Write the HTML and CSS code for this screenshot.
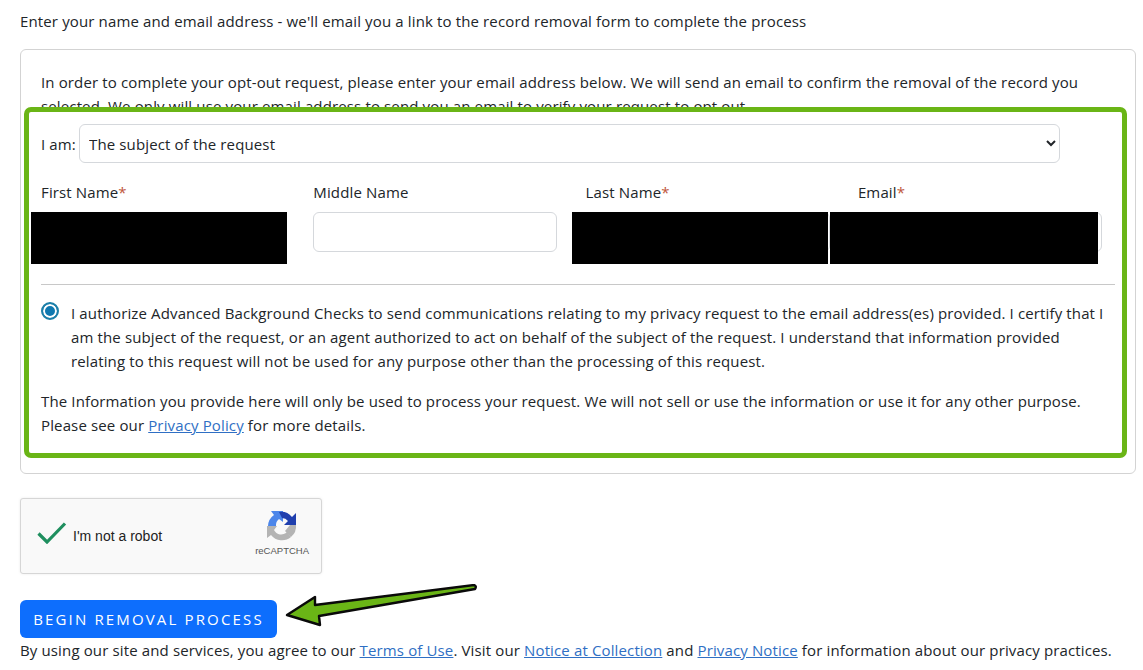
FILE: index.html
```html
<!DOCTYPE html>
<html lang="en">
<head>
<meta charset="utf-8">
<title>Record removal</title>
<link rel="stylesheet" href="styles.css">
</head>
<body>
<p class="lead">Enter your name and email address - we'll email you a link to the record removal form to complete the process</p>
<section class="card">
  <p class="intro">In order to complete your opt-out request, please enter your email address below. We will send an email to confirm the removal of the record you selected. We only will use your email address to send you an email to verify your request to opt out.</p>
  <div class="highlight">
    <div class="iam">
      <label class="iam-label">I am:</label>
      <select class="select"><option>The subject of the request</option></select>
    </div>
    <div class="fields">
      <div class="field"><label>First Name<span class="req">*</span></label><div class="control"><input class="input"><i class="redact redact-first"></i></div></div>
      <div class="field"><label>Middle Name</label><div class="control"><input class="input"></div></div>
      <div class="field"><label>Last Name<span class="req">*</span></label><div class="control"><input class="input"><i class="redact redact-last"></i></div></div>
      <div class="field"><label>Email<span class="req">*</span></label><div class="control"><input class="input"><i class="redact redact-email"></i></div></div>
    </div>
    <hr class="rule">
    <div class="consent">
      <span class="radio"></span>
      <p>I authorize Advanced Background Checks to send communications relating to my privacy request to the email address(es) provided. I certify that I am the subject of the request, or an agent authorized to act on behalf of the subject of the request. I understand that information provided relating to this request will not be used for any purpose other than the processing of this request.</p>
    </div>
    <p class="note">The Information you provide here will only be used to process your request. We will not sell or use the information or use it for any other purpose. Please see our <a href="#">Privacy Policy</a> for more details.</p>
  </div>
</section>
<div class="captcha">
  <svg class="check" viewBox="0 0 30 22" width="30" height="22"><path d="M1.5 11.5 L10 20 L28 1.5" fill="none" stroke="#1f8f5f" stroke-width="3.2"/></svg>
  <span class="captcha-text">I'm not a robot</span>
  <div class="captcha-brand">
    <svg viewBox="0 0 32 32" width="32" height="32">
      <path d="M2 16 A14 14 0 0 1 8 5 L5 1 L17 1 L17 12 L13 9 A8 8 0 0 0 10 16 Z" fill="#4c86ea"/>
      <path d="M13 2 A14 14 0 0 1 26 7 L30 3 L30 15 L18 15 L22 11 A8 8 0 0 0 16 8 Z" fill="#1f3fae"/>
      <path d="M1 16 L11 16 L8 20 A8 8 0 0 0 21 22 L25 27 A14 14 0 0 1 5 25 L1 28 Z" fill="#b4b4b4"/>
      <path d="M19 21 L24 15 L30 15 A14 14 0 0 1 25 27 Z" fill="#b4b4b4"/>
    </svg>
    <span class="captcha-name">reCAPTCHA</span>
  </div>
</div>
<div class="action">
  <button class="begin">BEGIN REMOVAL PROCESS</button>
  <svg class="arrow" viewBox="0 0 200 50" width="200" height="50"><path d="M3 31 L31 13 L31 21 L190 1 Q193 2 191 5 L35 32 L36 41 Z" fill="#6ab516" stroke="#0a0a0a" stroke-width="2.4" stroke-linejoin="round"/></svg>
</div>
<p class="foot">By using our site and services, you agree to our <a href="#">Terms of Use</a>. Visit our <a href="#">Notice at Collection</a> and <a href="#">Privacy Notice</a> for information about our privacy practices.</p>
</body>
</html>
```
FILE: styles.css
```css
* { box-sizing: border-box; }
html, body { margin: 0; height: 670px; overflow: hidden; }
body {
  padding: 9px 7px 0 20px;
  background: #fff;
  color: #212529;
  font: 15px/24px "Open Sans", sans-serif;
  letter-spacing: .135px;
}
p { margin: 0; }
a { color: #2f6fc4; text-decoration: underline; }
.lead { margin-bottom: 16px; }
.card {
  height: 425px;
  padding: 20px 20px 0;
  border: 1px solid #d3d3d3;
  border-radius: 6px;
}
.intro { height: 37px; overflow: hidden; }
.highlight {
  position: relative;
  margin: 0 -12px 0 -17px;
  height: 351px;
  padding: 12px 7px 0 12px;
  background: #fff;
  border: 5px solid #6ab516;
  border-radius: 7px;
}
.iam { display: flex; align-items: center; gap: 4px; height: 39px; }
.iam-label { flex: none; width: 34px; white-space: nowrap; }
.select {
  width: 981px;
  height: 39px;
  padding: 0 5px;
  border: 1px solid #d5d8dc;
  border-radius: 6px;
  background: #fff;
  color: #212529;
  font: inherit;
  letter-spacing: inherit;
}
.fields {
  display: grid;
  grid-template-columns: repeat(4, 244px);
  column-gap: 28.3px;
  margin-top: 17px;
}
.field label { display: block; height: 32px; }
.req { color: #c0563c; }
.control { position: relative; height: 52px; }
.input {
  display: block;
  width: 100%;
  height: 40px;
  border: 1px solid #d5d8dc;
  border-radius: 6px;
  background: #fff;
}
.redact { position: absolute; top: 0; height: 52px; background: #000; }
.redact-first { left: -10px; width: 256px; }
.redact-last { left: -14px; width: 256px; }
.redact-email { left: -28px; width: 268px; }
.rule { margin: 20px 0 16px; border: 0; border-top: 1px solid #c8c8c8; }
.consent { display: flex; gap: 12px; }
.radio {
  flex: none;
  width: 18px;
  height: 18px;
  margin-top: 1px;
  border: 2px solid #1c7fa8;
  border-radius: 50%;
  background: #0f78b0;
  box-shadow: inset 0 0 0 2px #fff;
}
.note { margin-top: 16px; }
.captcha {
  display: flex;
  align-items: center;
  width: 302px;
  height: 76px;
  margin-top: 24px;
  padding: 0 12px 0 16px;
  background: #f9f9f9;
  border: 1px solid #d6d6d6;
  border-radius: 3px;
  box-shadow: 0 0 3px rgba(0,0,0,.08);
  letter-spacing: 0;
}
.check { flex: none; margin-top: -7px; }
.captcha-text { margin-left: 6px; font: 14px "Liberation Sans", sans-serif; color: #222; }
.captcha-brand { display: flex; flex-direction: column; align-items: center; margin: 0 0 4px auto; }
.captcha-name { margin-top: 2px; font: 9.5px/14px "Liberation Sans", sans-serif; color: #555; }
.action { position: relative; margin-top: 26px; height: 38px; }
.begin {
  display: block;
  width: 257px;
  height: 38px;
  padding: 0;
  border: 0;
  border-radius: 6px;
  background: #0d6efd;
  color: #fff;
  font: 15px/38px "Open Sans", sans-serif;
  letter-spacing: 2.15px;
}
.arrow { position: absolute; left: 264px; top: -16px; }
```
